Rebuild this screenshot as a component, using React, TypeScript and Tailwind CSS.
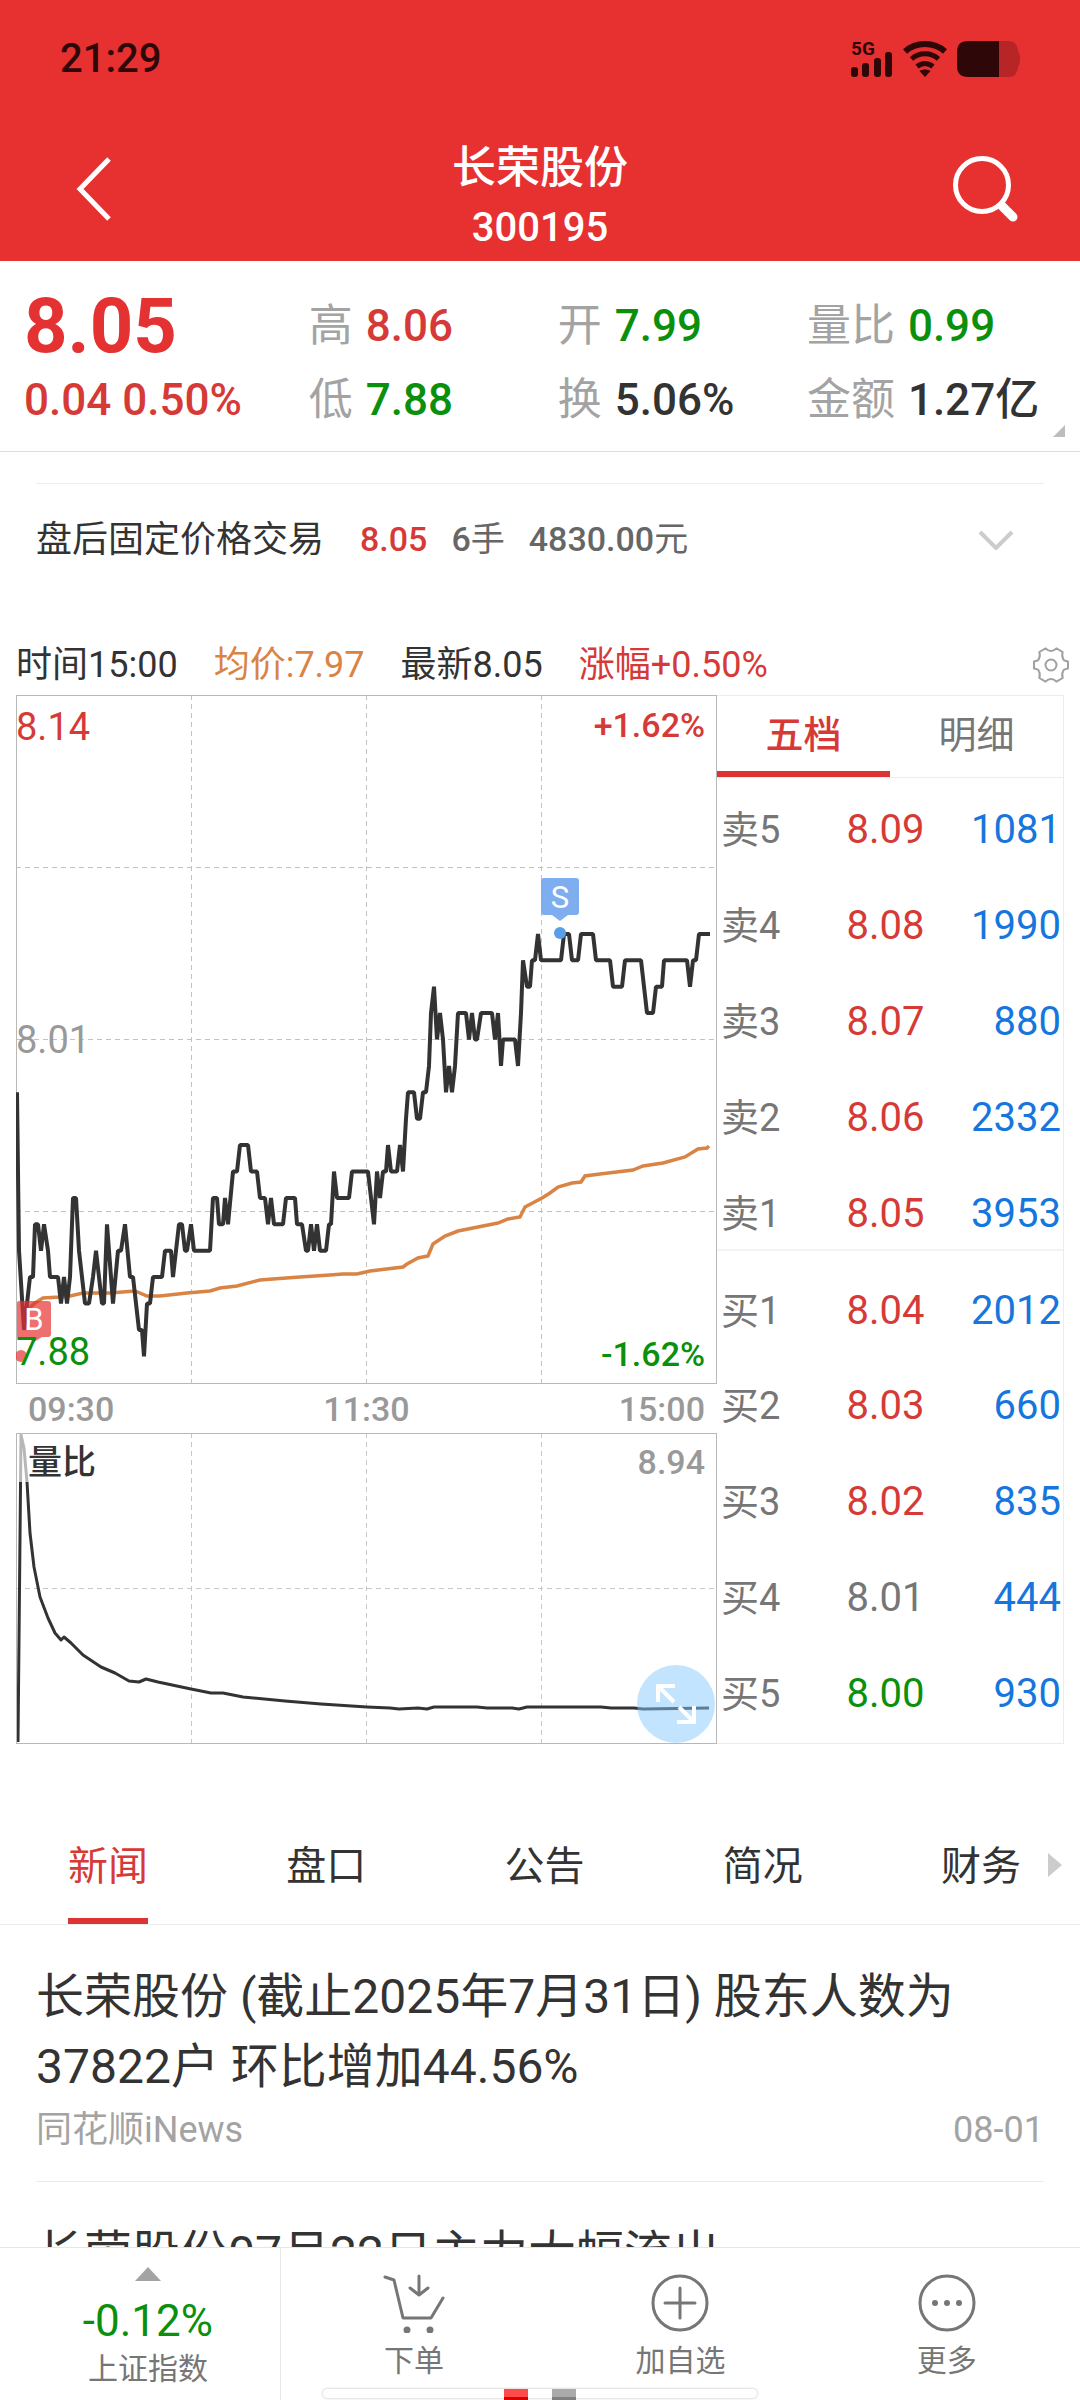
import React from 'react';

type Tone = 'up' | 'down' | 'flat' | 'dark';

const toneClass: Record<Tone, string> = {
  up: 'text-[#d63a37]',
  down: 'text-[#0a900c]',
  flat: 'text-[#767676]',
  dark: 'text-[#333333]',
};

const stats: { label: string; value: string; tone: Tone }[] = [
  { label: '高', value: '8.06', tone: 'up' },
  { label: '开', value: '7.99', tone: 'down' },
  { label: '量比', value: '0.99', tone: 'down' },
  { label: '低', value: '7.88', tone: 'down' },
  { label: '换', value: '5.06%', tone: 'dark' },
  { label: '金额', value: '1.27亿', tone: 'dark' },
];

const asks: { label: string; price: string; volume: string; tone: Tone }[] = [
  { label: '卖5', price: '8.09', volume: '1081', tone: 'up' },
  { label: '卖4', price: '8.08', volume: '1990', tone: 'up' },
  { label: '卖3', price: '8.07', volume: '880', tone: 'up' },
  { label: '卖2', price: '8.06', volume: '2332', tone: 'up' },
  { label: '卖1', price: '8.05', volume: '3953', tone: 'up' },
];

const bids: { label: string; price: string; volume: string; tone: Tone }[] = [
  { label: '买1', price: '8.04', volume: '2012', tone: 'up' },
  { label: '买2', price: '8.03', volume: '660', tone: 'up' },
  { label: '买3', price: '8.02', volume: '835', tone: 'up' },
  { label: '买4', price: '8.01', volume: '444', tone: 'flat' },
  { label: '买5', price: '8.00', volume: '930', tone: 'down' },
];

const newsTabs = ['新闻', '盘口', '公告', '简况', '财务'];

// [x, ticks away from the previous close of 8.01]
const priceTicks: [number, number][] = [
  [1, -2], [3, -8], [8, -11], [11, -10], [14, -9], [17, -9], [19, -7], [22, -7], [25, -8], [28, -7],
  [32, -8], [34, -9], [42, -9], [45, -10], [48, -9], [51, -10], [54, -9], [57, -6], [60, -6], [63, -8],
  [69, -10], [73, -10], [77, -9], [80, -8], [86, -10], [88, -10], [91, -7], [97, -10], [102, -8], [105, -8],
  [109, -7], [114, -9], [117, -9], [123, -11], [126, -11], [128, -12], [131, -10], [134, -10], [137, -9], [146, -9],
  [149, -8], [155, -8], [157, -9], [163, -7], [166, -7], [169, -8], [171, -8], [175, -7], [178, -8], [194, -8],
  [197, -6], [201, -6], [203, -7], [207, -7], [209, -6], [212, -7], [217, -5], [221, -5], [224, -4], [232, -4],
  [235, -5], [241, -5], [244, -6], [249, -6], [252, -7], [255, -6], [258, -7], [267, -7], [270, -6], [279, -6],
  [281, -7], [286, -7], [290, -8], [292, -8], [295, -7], [298, -8], [301, -7], [304, -8], [310, -8], [313, -7],
  [315, -7], [318, -5], [321, -6], [333, -6], [336, -5], [352, -5], [358, -7], [361, -5], [364, -6], [367, -5],
  [370, -5], [372, -4], [375, -5], [381, -5], [384, -4], [387, -5], [390, -3], [392, -2], [398, -2], [401, -3],
  [404, -3], [407, -2], [410, -2], [413, -1], [415, 1], [418, 2], [421, 0], [424, 1], [427, 0], [430, -2],
  [433, -1], [436, -2], [439, -1], [442, 1], [450, 1], [453, 0], [456, 1], [459, 0], [461, 0], [465, 1],
  [476, 1], [479, 0], [482, 1], [485, -1], [487, 0], [499, 0], [502, -1], [505, 1], [507, 3], [511, 2],
  [514, 2], [516, 3], [519, 3], [522, 4], [525, 3], [545, 3], [548, 4], [553, 4], [556, 3], [562, 3],
  [565, 4], [577, 4], [580, 3], [594, 3], [597, 2], [606, 2], [609, 3], [625, 3], [631, 1], [637, 1],
  [640, 2], [646, 2], [648, 3], [671, 3], [674, 2], [677, 3], [680, 3], [683, 4], [694, 4],
];

const pricePoints = priceTicks.map(([x, t]) => `${x},${344.5 - t * 26.4}`).join(' ');

const averagePoints =
  '11,615 19,608 27,603 44,602 54,601 67,598 94,598 119,596 131,601 144,601 171,598 194,596 204,593 221,591 244,585 257,584 284,582 314,580 327,579 341,579 354,576 387,572 391,569 402,563 412,561 417,549 429,541 442,536 462,532 482,528 492,524 504,522 509,512 526,503 534,498 542,492 556,488 565,487 569,481 584,479 617,475 627,471 647,468 669,462 682,454 691,453 693,451';

const ratioPoints =
  '2,309 5,2 8,15 11,49 14,100 18,134 24,164 32,185 39,200 45,207 48,204 55,210 67,222 85,234 99,240 113,248 123,249 130,246 142,249 175,256 195,260 207,260 227,264 269,268 305,271 351,274 374,275 383,276 402,275 411,276 418,274 461,274 471,275 496,275 503,276 511,274 585,274 595,275 618,275 627,276 693,275';

const StatusBar: React.FC = () => (
  <div className="flex h-[113px] items-center justify-between px-[60px] pt-1 text-[#2e0808]">
    <span className="text-[40px] font-medium leading-none">21:29</span>
    <div className="flex items-center gap-2.5">
      <div className="relative h-9 w-[42px]">
        <span className="absolute left-0 top-0 text-[19px] font-bold leading-[16px]">5G</span>
        <svg viewBox="0 0 42 36" className="h-9 w-[42px]" fill="currentColor">
          <rect x="0" y="26" width="7" height="10" rx="3" />
          <rect x="11" y="22" width="7" height="14" rx="3" />
          <rect x="23" y="17" width="7" height="19" rx="3" />
          <rect x="34" y="11" width="7" height="25" rx="3" />
        </svg>
      </div>
      <svg viewBox="0 0 44 36" className="h-9 w-11" fill="none" stroke="currentColor" strokeWidth="6">
        <path d="M2 10.500C13 0.500 31 0.500 42 10.500" />
        <path d="M8.500 18C16 11 28 11 35.500 18" strokeWidth="5" />
        <path d="M14 25.500C19 21.500 25 21.500 30 25.500" strokeWidth="5" />
        <path d="M22 36L16.500 30C19.500 28 24.500 28 27.500 30Z" fill="currentColor" stroke="none" />
      </svg>
      <svg viewBox="0 0 63 36" className="h-9 w-[63px]">
        <path d="M42 0H52Q60 0 61 10Q63 13 63 18Q63 23 61 26Q60 36 52 36H42Z" fill="#b82526" />
        <path d="M42 0H11Q0 0 0 11V25Q0 36 11 36H42Z" fill="#2e0808" />
      </svg>
    </div>
  </div>
);

const TopNav: React.FC = () => (
  <div className="flex h-[148px] items-center justify-between px-[60px] pt-1 text-white">
    <button aria-label="返回" className="flex w-[68px] justify-center">
      <svg viewBox="0 0 36 64" className="h-16 w-9" fill="none" stroke="currentColor" strokeWidth="5">
        <path d="M33 2L4 32L33 62" />
      </svg>
    </button>
    <div className="pt-[18px] text-center">
      <h1 className="text-[44px] font-medium leading-[60px]">长荣股份</h1>
      <p className="text-[40px] font-medium leading-[60px]">300195</p>
    </div>
    <button aria-label="搜索" className="flex w-[68px] justify-center">
      <svg viewBox="0 0 68 70" className="h-[70px] w-[68px]" fill="none" stroke="currentColor">
        <circle cx="30" cy="31" r="26.500" strokeWidth="5" />
        <path d="M50 52L61 63" strokeWidth="9" strokeLinecap="round" />
      </svg>
    </button>
  </div>
);

const QuoteSummary: React.FC = () => (
  <section className="relative grid grid-cols-[8fr_21fr] border-b border-[#dedede] px-6 pb-3.5 pt-7">
    <div className="text-[#d63a37]">
      <p className="text-[76px] font-bold leading-[74px] text-[#e43131]">8.05</p>
      <p className="whitespace-nowrap text-[44px] font-medium leading-[74px]">0.04 0.50%</p>
    </div>
    <dl className="grid grid-cols-3 text-[44px] leading-[74px]">
      {stats.map((s) => (
        <div key={s.label} className="flex gap-[13px] whitespace-nowrap">
          <dt className="text-[#a3a3a3]">{s.label}</dt>
          <dd className={`font-medium ${toneClass[s.tone]}`}>{s.value}</dd>
        </div>
      ))}
    </dl>
    <svg viewBox="0 0 12 12" className="absolute bottom-3.5 right-[15px] size-3" fill="#bdbdbd">
      <path d="M12 0V12H0Z" />
    </svg>
  </section>
);

const AfterHours: React.FC = () => (
  <section className="mx-9 mt-[31px] flex h-[112px] items-center border-t border-[#ededed] text-[34px] font-medium text-[#666666]">
    <h2 className="text-[36px] font-normal text-[#333333]">盘后固定价格交易</h2>
    <span className="ml-9 text-[#d63a37]">8.05</span>
    <span className="ml-6">
      6<span className="font-normal">手</span>
    </span>
    <span className="ml-6">
      4830.00<span className="font-normal">元</span>
    </span>
    <button aria-label="展开" className="ml-auto mr-[30px]">
      <svg viewBox="0 0 36 20" className="h-5 w-9" fill="none" stroke="#cccccc" strokeWidth="4">
        <path d="M2 2L18 18L34 2" />
      </svg>
    </button>
  </section>
);

const GearIcon: React.FC = () => (
  <svg viewBox="0 0 36 36" className="size-9" fill="none" stroke="#a0a0a0" strokeWidth="2" strokeLinejoin="round">
    <path d="M35 14.400V21.600Q30.500 22 30 24.500Q28.500 27 29.700 31L23.400 34.600Q21 32 18 32Q15 32 12.600 34.600L6.300 31Q7.500 27 6 24.500Q5.500 22 1 21.600V14.400Q5.500 14 6 11.500Q7.500 9 6.300 5L12.600 1.400Q15 4 18 4Q21 4 23.400 1.400L29.700 5Q28.500 9 30 11.500Q30.500 14 35 14.400Z" />
    <circle cx="18" cy="18" r="5.500" />
  </svg>
);

const ChartLegend: React.FC = () => (
  <div className="mt-9 flex h-[64px] items-center gap-9 pl-4 pr-[11px] pt-1 text-[36px] text-[#333333]">
    <span>时间15:00</span>
    <span className="text-[#d98344]">均价:7.97</span>
    <span>最新8.05</span>
    <span className="text-[#d63a37]">涨幅+0.50%</span>
    <button aria-label="设置" className="ml-auto">
      <GearIcon />
    </button>
  </div>
);

const PriceChart: React.FC = () => (
  <div className="relative">
    <svg viewBox="0 0 701 689" className="block w-full">
      <g stroke="#c2c2c2" strokeWidth="1" strokeDasharray="5 4">
        <path d="M175.500 0V689M350.500 0V689M525.500 0V689" />
        <path d="M0 172.500H701M0 344.500H701M0 516.500H701" />
      </g>
      <rect x="0.500" y="0.500" width="700" height="688" fill="none" stroke="#b8b8b8" />
      <polyline points={averagePoints} fill="none" stroke="#d98344" strokeWidth="3.500" />
      <polyline points={pricePoints} fill="none" stroke="#333333" strokeWidth="4" strokeLinejoin="bevel" />
      <g fill="#e63232" fillOpacity="0.7">
        <path d="M3 606H32Q35 606 35 609V639Q35 642 32 642H26L18 647L10 642H1V608Q1 606 3 606Z" />
        <circle cx="5" cy="661" r="6" />
      </g>
      <text x="18" y="635" fontSize="31" fill="#ffffff" textAnchor="middle">B</text>
      <path d="M528 183H560Q563 183 563 186V217Q563 220 560 220H552L544 226L536 220H528Q525 220 525 217V186Q525 183 528 183Z" fill="#7eaef0" />
      <circle cx="544" cy="238" r="6" fill="#5c9de8" />
      <text x="544" y="213" fontSize="31" fill="#ffffff" textAnchor="middle">S</text>
    </svg>
    <div className="absolute inset-y-0 left-0 flex flex-col justify-between py-2.5 text-[38px] leading-[44px]">
      <span className="text-[#d63a37]">8.14</span>
      <span className="text-[#999999]">8.01</span>
      <span className="text-[#0a900c]">7.88</span>
    </div>
    <div className="absolute inset-y-0 right-3 flex flex-col items-end justify-between py-2 text-[34px] font-medium leading-[44px]">
      <span className="text-[#d63a37]">+1.62%</span>
      <span className="text-[#0a900c]">-1.62%</span>
    </div>
  </div>
);

const RatioChart: React.FC = () => (
  <div className="relative">
    <svg viewBox="0 0 701 311" className="block w-full">
      <g stroke="#c8c8c8" strokeWidth="1" strokeDasharray="5 4">
        <path d="M175.500 0V311M350.500 0V311M525.500 0V311M0 155.500H701" />
      </g>
      <polyline points={ratioPoints} fill="none" stroke="#333333" strokeWidth="3" strokeLinejoin="round" />
      <rect x="1" y="1" width="90" height="48" fill="#ffffff" fillOpacity="0.65" />
      <rect x="0.500" y="0.500" width="700" height="310" fill="none" stroke="#b8b8b8" />
    </svg>
    <span className="absolute left-3 top-1 text-[34px] font-medium leading-[50px] text-[#333333]">量比</span>
    <span className="absolute right-3 top-1 text-[34px] font-medium leading-[50px] text-[#999999]">8.94</span>
    <button
      aria-label="全屏"
      className="absolute bottom-px right-0.5 flex size-[78px] items-center justify-center rounded-full bg-[#85caff]/50"
    >
      <svg viewBox="0 0 40 40" className="size-10" fill="none" stroke="#ffffff" strokeWidth="4">
        <path d="M2 18V2H19M2 2L18 18" />
        <path d="M38 22V38H21M38 38L23 23" />
      </svg>
    </button>
  </div>
);

const OrderBook: React.FC = () => (
  <div className="border-y border-r border-[#ececec]">
    <div className="grid h-[82px] grid-cols-2 border-b border-[#ececec] text-[38px]">
      <button className="border-b-[6px] border-[#dc3434] pt-1 font-medium text-[#d63a37]">五档</button>
      <button className="border-b-[6px] border-transparent pt-1 text-[#767676]">明细</button>
    </div>
    <table className="w-full table-fixed text-[40px] leading-[44px]">
      <tbody>
        {asks.map((o, i) => (
          <tr key={o.label} className={i === 0 ? 'h-[88px]' : 'h-24'}>
            <th scope="row" className={`w-[30%] pl-1 text-left text-[38px] font-normal text-[#767676] ${i === 0 ? 'pt-4' : 'pt-6'}`}>{o.label}</th>
            <td className={`w-[30%] text-right ${i === 0 ? 'pt-4' : 'pt-6'} ${toneClass[o.tone]}`}>{o.price}</td>
            <td className={`pr-0.5 text-right text-[#1676dd] ${i === 0 ? 'pt-4' : 'pt-6'}`}>{o.volume}</td>
          </tr>
        ))}
      </tbody>
      <tbody className="border-t-2 border-[#f3f3f3]">
        {bids.map((o) => (
          <tr key={o.label} className="h-24">
            <th scope="row" className="pl-1 pt-6 text-left text-[38px] font-normal text-[#767676]">{o.label}</th>
            <td className={`pt-6 text-right ${toneClass[o.tone]}`}>{o.price}</td>
            <td className="pr-0.5 pt-6 text-right text-[#1676dd]">{o.volume}</td>
          </tr>
        ))}
      </tbody>
    </table>
  </div>
);

const NewsTabs: React.FC = () => (
  <nav className="relative mt-16 flex h-[117px] justify-between border-b border-[#ebebeb] pl-[68px] pr-[59px] text-[40px] text-[#333333]">
    {newsTabs.map((t, i) => (
      <button key={t} className={i === 0 ? 'border-b-[6px] border-[#dc3434] pt-2 text-[#d63a37]' : 'pt-0.5'}>
        {t}
      </button>
    ))}
    <svg viewBox="0 0 14 24" className="absolute right-[18px] top-[45px] h-6 w-3.5" fill="#cccccc">
      <path d="M0 0L14 12L0 24Z" />
    </svg>
  </nav>
);

const NewsList: React.FC = () => (
  <div className="mx-9 text-[48px] leading-[70px] text-[#333333]">
    <article className="border-b border-[#ebebeb] pb-[25px] pt-[37px]">
      <h3>长荣股份 (截止2025年7月31日) 股东人数为37822户 环比增加44.56%</h3>
      <p className="flex justify-between pt-0.5 text-[36px] leading-[52px] text-[#a3a3a3]">
        <span>同花顺iNews</span>
        <time>08-01</time>
      </p>
    </article>
    <article className="pt-[37px]">
      <h3>长荣股份07月22日主力大幅流出</h3>
    </article>
  </div>
);

const BottomBar: React.FC = () => (
  <footer className="relative flex h-[153px] shrink-0 border-t border-[#e6e6e6] bg-white text-[30px] leading-[40px] text-[#767676]">
    <button className="flex w-[26%] flex-col items-center border-r border-[#e6e6e6] pl-4 pt-[19px]">
      <svg viewBox="0 0 26 14" className="h-3.5 w-[26px]" fill="#a3a3a3">
        <path d="M13 0L26 14H0Z" />
      </svg>
      <span className="mt-3.5 text-[44px] leading-[52px] text-[#0a900c]">-0.12%</span>
      <span className="mt-0.5">上证指数</span>
    </button>
    <div className="flex flex-1">
      <button className="flex flex-1 flex-col items-center gap-2 pt-[25px]">
        <svg viewBox="0 0 62 60" className="h-[60px] w-[62px]" fill="none" stroke="currentColor" strokeWidth="3" strokeLinecap="round" strokeLinejoin="round">
          <path d="M2 4L11 7L20 45H48L60 25" />
          <path d="M36 3V22M27 15L36 22L45 15" />
          <circle cx="24" cy="57" r="3.500" fill="currentColor" stroke="none" />
          <circle cx="47" cy="57" r="3.500" fill="currentColor" stroke="none" />
        </svg>
        <span>下单</span>
      </button>
      <button className="flex flex-1 flex-col items-center gap-2 pt-[25px]">
        <svg viewBox="0 0 60 60" className="size-[60px]" fill="none" stroke="currentColor" strokeWidth="3" strokeLinecap="round">
          <circle cx="30" cy="30" r="27" />
          <path d="M30 15V45M15 30H45" />
        </svg>
        <span>加自选</span>
      </button>
      <button className="flex flex-1 flex-col items-center gap-2 pt-[25px]">
        <svg viewBox="0 0 60 60" className="size-[60px]" fill="none" stroke="currentColor" strokeWidth="3">
          <circle cx="30" cy="30" r="27" />
          <g fill="currentColor" stroke="none">
            <circle cx="18" cy="30" r="3" />
            <circle cx="30" cy="30" r="3" />
            <circle cx="42" cy="30" r="3" />
          </g>
        </svg>
        <span>更多</span>
      </button>
    </div>
    <div className="absolute inset-x-0 bottom-0 flex h-[11px] justify-center">
      <div className="flex h-[9px] w-[434px] justify-center gap-6 rounded-full bg-white shadow-[0_0_3px_#bbbbbb]">
        <span className="h-[11px] w-6 border-b-[3px] border-[#dd0000] bg-[#ff4a4a]" />
        <span className="h-[11px] w-6 border-b-[3px] border-[#808080] bg-[#aaaaaa]" />
      </div>
    </div>
  </footer>
);

export default function App() {
  return (
    <div className="flex h-screen flex-col bg-white font-['Roboto','Noto_Sans_CJK_SC',sans-serif]">
      <header className="shrink-0 bg-[#e73030]">
        <StatusBar />
        <TopNav />
      </header>
      <main className="min-h-0 flex-1 overflow-hidden">
        <QuoteSummary />
        <AfterHours />
        <ChartLegend />
        <div className="grid grid-cols-[701fr_347fr] px-4">
          <div className="min-w-0">
            <PriceChart />
            <div className="flex h-[49px] items-center justify-between px-3 pt-0.5 text-[34px] font-medium text-[#999999]">
              <span>09:30</span>
              <span>11:30</span>
              <span>15:00</span>
            </div>
            <RatioChart />
          </div>
          <OrderBook />
        </div>
        <NewsTabs />
        <NewsList />
      </main>
      <BottomBar />
    </div>
  );
}
